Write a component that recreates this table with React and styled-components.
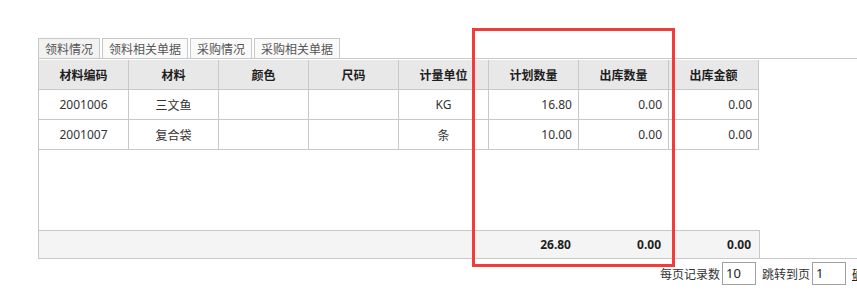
import React from 'react';
import styled, { createGlobalStyle } from 'styled-components';

const GlobalStyle = createGlobalStyle`
  html, body {
    margin: 0;
    padding: 0;
    background: #fff;
    overflow: hidden;
  }
  body {
    font-family: "Noto Sans", "Noto Sans CJK SC", sans-serif;
    font-size: 12px;
    color: #333;
  }
`;

const Page = styled.div`
  position: relative;
  width: 857px;
  height: 299px;
  padding: 38px 0 0 38px;
  box-sizing: border-box;
  overflow: hidden;
`;

const TabBar = styled.div`
  display: flex;
  gap: 2px;
  height: 21px;
  box-sizing: border-box;
  border-bottom: 1px solid #c8c8c8;
`;

const Tab = styled.div`
  height: 20px;
  padding: 0 6px;
  box-sizing: border-box;
  border: 1px solid #c8c8c8;
  border-bottom: none;
  background: ${props => (props.active ? '#f2f2f2' : '#fafafa')};
  color: #555;
  font-family: "Noto Sans CJK SC", sans-serif;
  font-size: 12px;
  line-height: 19px;
  white-space: nowrap;
`;

const GridBox = styled.div`
  border-left: 1px solid #c8c8c8;
  border-bottom: 1px solid #c8c8c8;
  padding-top: 1px;
`;

const Row = styled.div`
  display: grid;
  grid-template-columns: repeat(8, 90px);
  width: 720px;
  height: ${props => props.h || 30}px;
  background: ${props => props.bg || '#fff'};
  border-top: ${props => (props.topLine ? '1px solid #c8c8c8' : 'none')};
  border-right: ${props => (props.topLine ? '1px solid #c8c8c8' : 'none')};
  box-sizing: content-box;
`;

const Cell = styled.div`
  display: flex;
  align-items: center;
  justify-content: ${props =>
    props.align === 'right' ? 'flex-end' : 'center'};
  padding-right: ${props => (props.align === 'right' ? props.pad || 6 : 0)}px;
  box-sizing: border-box;
  border-right: ${props => (props.plain ? 'none' : '1px solid #c8c8c8')};
  border-bottom: ${props => (props.plain ? 'none' : '1px solid #c8c8c8')};
  font-family: "Noto Sans", "Noto Sans CJK SC", sans-serif;
  font-size: 12px;
  font-weight: ${props => (props.bold ? 700 : 400)};
  color: ${props => (props.bold ? '#1e1e1e' : '#333')};
  white-space: nowrap;
`;

const EmptyArea = styled.div`
  height: 80px;
`;

const Pager = styled.div`
  display: flex;
  align-items: center;
  margin: 3px 0 0 622px;
  font-family: "Noto Sans CJK SC", sans-serif;
  font-size: 12px;
  color: #333;
  white-space: nowrap;
`;

const PageInput = styled.div`
  flex-shrink: 0;
  width: 34px;
  height: 23px;
  box-sizing: border-box;
  border: 1px solid #a0a0a0;
  margin: 0 6px 0 2px;
  padding-left: 3px;
  font-family: "Noto Sans", sans-serif;
  font-size: 13px;
  line-height: 21px;
  color: #222;
`;

const Link = styled.span`
  text-decoration: underline;
  color: #222;
`;

const Marker = styled.div`
  position: absolute;
  left: 472px;
  top: 28px;
  width: 203px;
  height: 239px;
  box-sizing: border-box;
  border: 3px solid #f23b3b;
  pointer-events: none;
`;

const tabs = ['领料情况', '领料相关单据', '采购情况', '采购相关单据'];
const headers = ['材料编码', '材料', '颜色', '尺码', '计量单位', '计划数量', '出库数量', '出库金额'];
const rows = [
  ['2001006', '三文鱼', '', '', 'KG', '16.80', '0.00', '0.00'],
  ['2001007', '复合袋', '', '', '条', '10.00', '0.00', '0.00'],
];
const totals = ['', '', '', '', '', '26.80', '0.00', '0.00'];

const App = () => (
  <Page>
    <GlobalStyle />
    <TabBar>
      {tabs.map((t, i) => (
        <Tab key={t} active={i === 0}>{t}</Tab>
      ))}
    </TabBar>
    <GridBox>
      <Row bg="#e8e8e8">
        {headers.map(h => (
          <Cell key={h} bold>{h}</Cell>
        ))}
      </Row>
      {rows.map(r => (
        <Row key={r[0]}>
          {r.map((v, i) => (
            <Cell key={i} align={i >= 5 ? 'right' : 'center'}>{v}</Cell>
          ))}
        </Row>
      ))}
      <EmptyArea />
      <Row bg="#f4f4f4" topLine h={27}>
        {totals.map((v, i) => (
          <Cell key={i} bold plain align="right" pad={8}>
            {v}
          </Cell>
        ))}
      </Row>
    </GridBox>
    <Pager>
      每页记录数
      <PageInput>10</PageInput>
      跳转到页
      <PageInput>1</PageInput>
      <Link>确定</Link>
    </Pager>
    <Marker />
  </Page>
);

export default App;
